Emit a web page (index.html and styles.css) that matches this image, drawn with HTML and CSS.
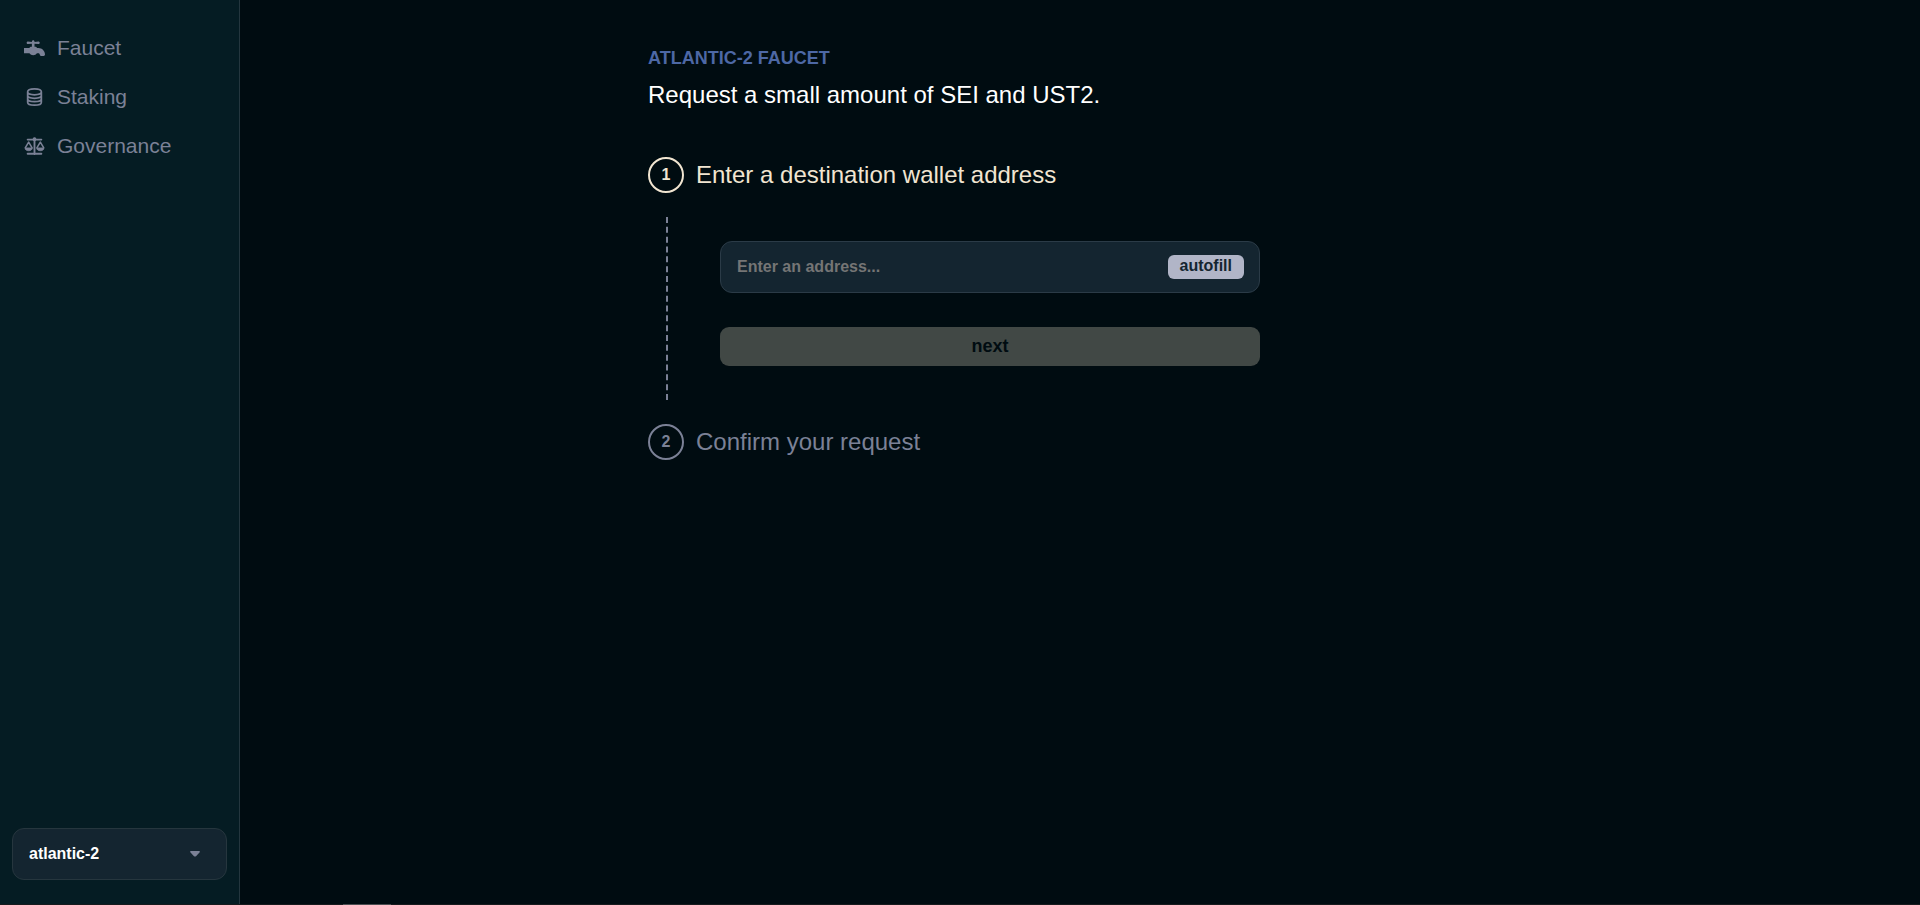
FILE: index.html
```html
<!DOCTYPE html>
<html lang="en">
<head>
<meta charset="utf-8">
<meta name="viewport" content="width=device-width, initial-scale=1">
<title>Atlantic-2 Faucet</title>
<link rel="stylesheet" href="styles.css">
</head>
<body>
<div class="app">
  <aside class="sidebar">
    <nav class="nav" aria-label="Main">
      <a class="nav-link" href="#faucet">
        <svg class="nav-icon" viewBox="0 64 512 384" aria-hidden="true"><path d="M224 64c-17.700 0-32 14.300-32 32v12L96 96c-17.700 0-32 14.300-32 32s14.300 32 32 32l96-8v72h-18.700c-8.500 0-16.600 3.400-22.600 9.400L128 256H0v128h132.100c20.200 29 53.900 48 91.900 48s71.700-19 91.900-48H352c17.700 0 32 14.300 32 32s14.300 32 32 32h64c17.700 0 32-14.300 32-32c0-88.400-71.600-160-160-160h-32l-22.600-22.600c-6-6-14.100-9.400-22.600-9.400H256v-72l96 8c17.700 0 32-14.300 32-32s-14.300-32-32-32l-96 12V96c0-17.700-14.300-32-32-32z"/></svg>
        <span>Faucet</span>
      </a>
      <a class="nav-link" href="#staking">
        <svg class="nav-icon outlined" viewBox="3 1.500 18 21" aria-hidden="true"><path stroke-width="2" d="M4 6c0-2 3.600-3.500 8-3.500S20 4 20 6s-3.600 3.500-8 3.500S4 8 4 6v12c0 2 3.600 3.500 8 3.500s8-1.500 8-3.500V6M4 10c0 2 3.600 3.500 8 3.500s8-1.500 8-3.500M4 14c0 2 3.600 3.500 8 3.500s8-1.500 8-3.500"/></svg>
        <span>Staking</span>
      </a>
      <a class="nav-link" href="#governance">
        <svg class="nav-icon outlined" viewBox="0 1 24 21" aria-hidden="true"><path d="M4 4h16M12 3v18M4 20.500h16" stroke-width="2.200" stroke-linecap="round"/><circle cx="12" cy="3.500" r="2.200" fill="currentColor" stroke="none"/><path d="M1 14L5.200 7 9.400 14M14.600 14l4.200-7L23 14" stroke-width="1.800" stroke-linejoin="round"/><path d="M1 13.800h8.400c0 2-1.700 3.200-4.200 3.200S1 15.800 1 13.800zM14.600 13.800H23c0 2-1.700 3.200-4.200 3.200s-4.200-1.200-4.200-3.200z" fill="currentColor" stroke-width="1"/></svg>
        <span>Governance</span>
      </a>
    </nav>
    <div class="network">
      <select class="network-select" aria-label="Network">
        <option>atlantic-2</option>
      </select>
      <svg class="network-caret" viewBox="0 0 10 6" aria-hidden="true"><path d="M1 0h8c.9 0 1.200.8.700 1.300L6 5.200c-.6.500-1.400.5-2 0L.3 1.300C-.2.800.1 0 1 0z"/></svg>
    </div>
  </aside>
  <main class="main">
    <div class="content">
      <header class="intro">
        <h1 class="eyebrow">ATLANTIC-2 FAUCET</h1>
        <p class="lead">Request a small amount of SEI and UST2.</p>
      </header>
      <section class="step active">
        <h2 class="step-title"><span class="step-number">1</span><label for="address">Enter a destination wallet address</label></h2>
        <form class="step-body">
          <div class="field">
            <input class="address" id="address" type="text" placeholder="Enter an address...">
            <button class="autofill" type="button">autofill</button>
          </div>
          <button class="next" type="submit" disabled>next</button>
        </form>
      </section>
      <section class="step">
        <h2 class="step-title"><span class="step-number">2</span><span>Confirm your request</span></h2>
      </section>
    </div>
  </main>
</div>
<div class="bottom-edge"><div class="bottom-thumb"></div></div>
</body>
</html>
```
FILE: styles.css
```css
* {
  box-sizing: border-box;
}

body {
  display: flex;
  flex-direction: column;
  min-height: 100vh;
  margin: 0;
  background: #000c11;
  color: #fff;
  font-family: "Liberation Sans", Arial, sans-serif;
}

button,
input,
select {
  font: inherit;
}

h1,
h2,
p {
  margin: 0;
}

.app {
  display: flex;
  flex: 1;
}

.sidebar {
  display: flex;
  flex: 0 0 240px;
  flex-direction: column;
  justify-content: space-between;
  padding: 36px 12px 24px;
  border-right: 1px solid #24363e;
  background: #051c23;
}

.nav {
  display: flex;
  flex-direction: column;
  gap: 25px;
  padding: 0 12px;
}

.nav-link {
  display: flex;
  align-items: center;
  gap: 12px;
  color: #7b8196;
  font-size: 21px;
  line-height: 24px;
  text-decoration: none;
}

.nav-icon {
  width: 21px;
  height: 18px;
  fill: currentColor;
}

.outlined {
  fill: none;
  stroke: currentColor;
}

.network {
  display: grid;
  align-items: center;
}

.network-select,
.network-caret {
  grid-area: 1 / 1;
}

.network-select {
  width: 100%;
  height: 52px;
  padding: 0 16px 2px;
  border: 1px solid #26363e;
  border-radius: 12px;
  appearance: none;
  background: #142530;
  color: #fff;
  font-size: 16px;
  font-weight: 700;
}

.network-caret {
  justify-self: end;
  width: 10px;
  height: 6px;
  margin-right: 27px;
  fill: #7b8196;
  pointer-events: none;
}

.main {
  flex: 1;
  min-width: 0;
  padding: 48px 24px;
}

.content {
  max-width: 864px;
  margin: 0 auto;
}

.intro {
  margin-bottom: 48px;
}

.eyebrow {
  margin-bottom: 12px;
  color: #4d68a5;
  font-size: 18px;
  font-weight: 700;
  line-height: 20px;
}

.lead {
  font-size: 24px;
  line-height: 29px;
}

.step {
  color: #7b8196;
}

.step-title {
  display: flex;
  align-items: center;
  gap: 12px;
  font-size: 24px;
  font-weight: 400;
}

.step-number {
  display: grid;
  width: 36px;
  height: 36px;
  border: 2px solid currentColor;
  border-radius: 50%;
  font-size: 16px;
  font-weight: 700;
  place-items: center;
}

.active {
  color: #f1e5d1;
}

.step-body {
  display: flex;
  flex-direction: column;
  gap: 34px;
  max-width: 594px;
  margin: 24px 0 24px 18px;
  padding: 24px 0 34px 52px;
  border-left: 2px dashed #7b8196;
}

.field {
  display: flex;
  align-items: center;
  height: 52px;
  padding: 0 15px 0 16px;
  border: 1px solid #2b3b47;
  border-radius: 12px;
  background: #142530;
}

.address {
  flex: 1;
  min-width: 0;
  padding: 0;
  border: 0;
  outline: 0;
  background: transparent;
  color: #fff;
  font-size: 16px;
  font-weight: 700;
}

.address::placeholder {
  color: #757575;
}

.autofill {
  height: 24px;
  padding: 0 12px 2px;
  border: 0;
  border-radius: 6px;
  background: #b1b5c7;
  color: #142530;
  font-size: 16px;
  font-weight: 700;
  line-height: 22px;
}

.next {
  height: 39px;
  padding: 0;
  border: 0;
  border-radius: 9px;
  background: #414845;
  color: #000c11;
  font-size: 18px;
  font-weight: 700;
}

.bottom-edge {
  height: 1px;
  padding-left: 343px;
  background: #171a1d;
}

.bottom-thumb {
  width: 48px;
  height: 1px;
  background: #4b4e51;
}
```
